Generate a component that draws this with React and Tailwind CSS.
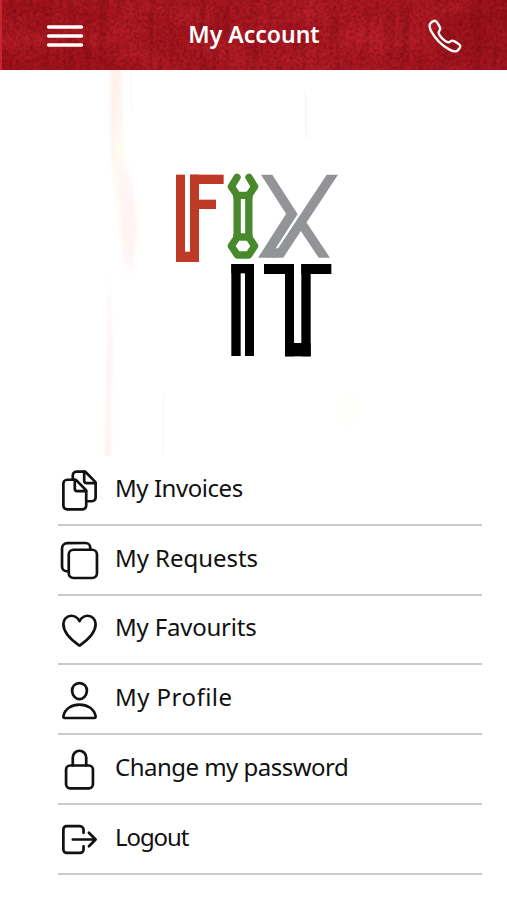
import {
  IoCallOutline,
  IoCopyOutline,
  IoDocumentsOutline,
  IoHeartOutline,
  IoLockClosedOutline,
  IoLogOutOutline,
  IoMenuOutline,
  IoPersonOutline,
} from "react-icons/io5";

const items = [
  { label: "My Invoices", icon: IoDocumentsOutline, spacing: "tracking-[-0.45px]" },
  { label: "My Requests", icon: IoCopyOutline, spacing: "tracking-[-0.05px]" },
  { label: "My Favourits", icon: IoHeartOutline, spacing: "tracking-[-0.2px]" },
  { label: "My Profile", icon: IoPersonOutline, spacing: "tracking-[0.45px]" },
  { label: "Change my password", icon: IoLockClosedOutline, spacing: "tracking-[-0.52px]" },
  { label: "Logout", icon: IoLogOutOutline, spacing: "tracking-[-1.1px]" },
];

// woven red cloth behind the header
function Cloth() {
  return (
    <svg className="absolute inset-0 h-full w-full" preserveAspectRatio="none" aria-hidden="true">
      <defs>
        <linearGradient id="red">
          <stop offset="0" stopColor="#a3131c" />
          <stop offset="0.3" stopColor="#a8161f" />
          <stop offset="0.55" stopColor="#ae1923" />
          <stop offset="0.8" stopColor="#ae1822" />
          <stop offset="1" stopColor="#98101a" />
        </linearGradient>
        <filter id="grain" x="0" y="0" width="100%" height="100%" colorInterpolationFilters="sRGB">
          <feTurbulence type="fractalNoise" baseFrequency="0.3 0.3" numOctaves="3" seed="4" />
          <feColorMatrix values="0 0 0 0 0.35  0 0 0 0 0  0 0 0 0 0.03  0.8 0 0 0 -0.27" />
        </filter>
        <filter id="weave" x="0" y="0" width="100%" height="100%" colorInterpolationFilters="sRGB">
          <feTurbulence type="fractalNoise" baseFrequency="0.12 0.015" numOctaves="2" seed="9" />
          <feColorMatrix values="0 0 0 0 0.35  0 0 0 0 0  0 0 0 0 0.03  0.6 0 0 0 -0.27" />
        </filter>
        <filter id="blotch" x="0" y="0" width="100%" height="100%" colorInterpolationFilters="sRGB">
          <feTurbulence type="fractalNoise" baseFrequency="0.02 0.04" numOctaves="4" seed="2" />
          <feColorMatrix values="0 0 0 0 0.82  0 0 0 0 0.17  0 0 0 0 0.2  0.9 0 0 0 -0.33" />
        </filter>
      </defs>
      <rect width="100%" height="100%" fill="url(#red)" />
      <rect width="100%" height="100%" filter="url(#blotch)" />
      <rect width="100%" height="100%" filter="url(#weave)" />
      <rect width="100%" height="100%" filter="url(#grain)" />
      <rect width="2" height="100%" fill="#c9242f" />
    </svg>
  );
}

// faint paint streaks
function Streaks() {
  return (
    <svg className="absolute inset-0 h-full w-full" viewBox="0 0 507 386" aria-hidden="true">
      <defs>
        <filter id="soft" x="-100%" y="-10%" width="300%" height="120%" colorInterpolationFilters="sRGB">
          <feGaussianBlur stdDeviation="1.5 8" />
        </filter>
      </defs>
      <g filter="url(#soft)">
        <path d="M110 -30h11l1 130 -5 30 -6 -50z" fill="#fff2ea" />
        <path d="M117 20h5l2 90 -5 40z" fill="#fff4f3" />
        <path d="M113 60l8 0 8 110 -9 0z" fill="#fffcf0" />
        <path d="M118 90l14 20 6 50 -6 40 -9 -10z" fill="#fff4f3" />
        <path d="M109 210l3 60 -2 150h-6z" fill="#fff2f1" />
      </g>
      <path d="M131.500 0v40" stroke="#fef5f3" />
      <path d="M305.500 20l1 48" stroke="#fef6f5" strokeWidth="2" />
      <path d="M163 325v60" stroke="#fef9fb" strokeWidth="2" />
      <ellipse cx="350" cy="340" rx="10" ry="18" fill="#fffefb" />
    </svg>
  );
}

function Slant({ x, y, w, h, angle }) {
  return <rect width={w} height={h} transform={`translate(${x} ${y}) skewX(${angle})`} />;
}

function Logo() {
  return (
    <svg className="relative h-[200px] w-[185px]" viewBox="0 0 555 600" role="img" aria-label="Fix It">
      <g fill="#bf3a26">
        <rect x="33" y="29" width="27" height="262" />
        <rect x="33" y="260" width="69" height="31" />
        <rect x="75" y="29" width="27" height="262" />
        <rect x="75" y="29" width="101" height="28" />
        <rect x="75" y="104" width="78" height="28" />
      </g>
      <g fill="none" stroke="#47892b" strokeWidth="22" strokeLinejoin="round" strokeLinecap="round">
        <path d="M216 37L199 65L217 91H251L269 65L252 37" />
        <path d="M199 243L217 216H251L269 243L251 270H217Z" />
        <path d="M216.500 95V214M251.500 95V214" />
      </g>
      <g fill="#47892b">
        <rect x="205" y="86" width="57" height="16" />
        <rect x="205" y="207" width="57" height="16" />
      </g>
      <g fill="#929497">
        <Slant x={288} y={29} w={34} h={119} angle={32.6} />
        <Slant x={363} y={147} w={35} h={131} angle={-32.6} />
        <Slant x={485} y={29} w={34} h={249} angle={-33.4} />
        <Slant x={327} y={250} w={20} h={28} angle={-33.4} />
        <Slant x={391} y={173} w={34} h={105} angle={33.6} />
      </g>
      <g fill="#000">
        <rect x="199" y="297" width="28" height="276" />
        <rect x="240" y="297" width="27" height="276" />
        <rect x="199" y="297" width="68" height="28" />
        <rect x="297" y="297" width="90" height="30" />
        <rect x="360" y="297" width="27" height="277" />
        <rect x="409" y="297" width="28" height="277" />
        <rect x="409" y="297" width="90" height="30" />
        <rect x="360" y="534" width="77" height="40" />
      </g>
    </svg>
  );
}

export default function App() {
  return (
    <div className="h-[900px] w-[507px] overflow-hidden bg-white font-['Noto_Sans',sans-serif] text-[#111]">
      <header className="relative h-[70px]">
        <Cloth />
        <div className="relative flex h-full items-center justify-between pr-[43px] pl-[41px] text-white">
          <button aria-label="Menu" className="pt-[2px]">
            <IoMenuOutline className="size-[48px] [&_path]:[stroke-width:36px]" />
          </button>
          <h1 className="pr-[7px] pb-[1px] text-[23px] font-semibold whitespace-nowrap">My Account</h1>
          <button aria-label="Call" className="pt-[2px]">
            <IoCallOutline className="size-[38px]" />
          </button>
        </div>
      </header>

      <section className="relative flex h-[386px] justify-center pt-[95px] pl-2">
        <Streaks />
        <Logo />
      </section>

      <ul className="ml-[58px] w-[424px]">
        {items.map(({ label, icon: Icon, spacing }) => (
          <li key={label} className="flex h-[69.75px] items-center gap-[14px] border-b-2 border-[#cbcbcb] pt-[2px]">
            <Icon className="size-[43px] shrink-0" />
            <span className={`pb-[6px] text-[24px] whitespace-nowrap ${spacing}`}>{label}</span>
          </li>
        ))}
      </ul>
    </div>
  );
}
